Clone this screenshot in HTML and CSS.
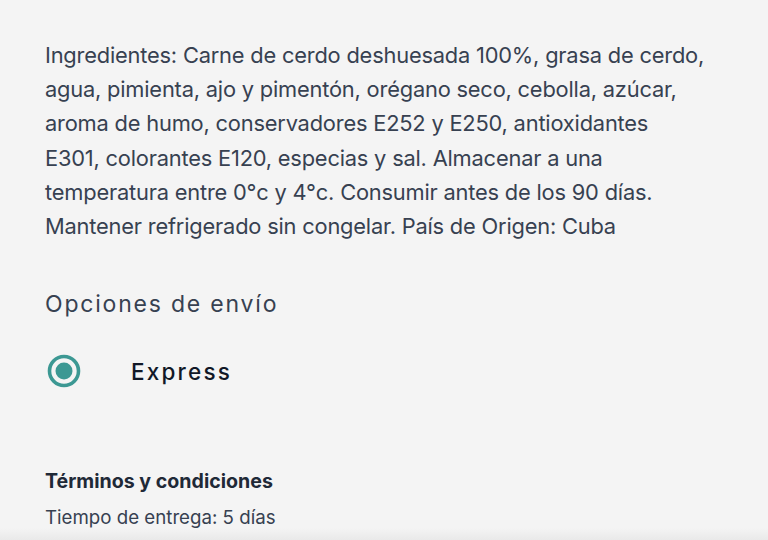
FILE: index.html
```html
<!DOCTYPE html>
<html lang="es">
<head>
<meta charset="utf-8">
<link rel="stylesheet" href="styles.css">
</head>
<body>
<main class="page">
  <p class="desc">Ingredientes: Carne de cerdo deshuesada 100%, grasa de cerdo,<br>agua, pimienta, ajo y pimentón, orégano seco, cebolla, azúcar,<br>aroma de humo, conservadores E252 y E250, antioxidantes<br>E301, colorantes E120, especias y sal. Almacenar a una<br>temperatura entre 0°c y 4°c. Consumir antes de los 90 días.<br>Mantener refrigerado sin congelar. País de Origen: Cuba</p>
  <h2 class="section-title">Opciones de envío</h2>
  <div class="option">
    <svg class="radio" width="34" height="34" viewBox="0 0 34 34"><circle cx="17" cy="17" r="14.5" fill="none" stroke="#3c9893" stroke-width="3.6"/><circle cx="17" cy="17" r="8.5" fill="#3c9893"/></svg>
    <span class="option-label">Express</span>
  </div>
  <h3 class="terms-title">Términos y condiciones</h3>
  <p class="terms-text">Tiempo de entrega: 5 días</p>
</main>
<div class="bottom-shade"></div>
</body>
</html>
```
FILE: styles.css
```css
html, body {
  margin: 0;
  padding: 0;
  background: #f4f4f4;
  height: 540px;
  overflow: hidden;
}
body {
  font-family: Inter, "Noto Sans", sans-serif;
  color: #374151;
  position: relative;
}
.page {
  padding: 38px 45px 0 45px;
}
.desc {
  margin: 0;
  font-size: 21.85px;
  line-height: 34.2px;
  letter-spacing: -0.2px;
  color: #374151;
  white-space: nowrap;
}
.section-title {
  margin: 46px 0 0 0;
  font-weight: 400;
  font-size: 23px;
  line-height: 30px;
  letter-spacing: 1.8px;
  color: #374151;
}
.option {
  display: flex;
  align-items: center;
  margin-top: 35px;
  padding-left: 2px;
}
.radio {
  display: block;
}
.option-label {
  margin-left: 50px;
  font-size: 22.5px;
  font-weight: 500;
  letter-spacing: 2.2px;
  color: #111827;
}
.terms-title {
  margin: 80px 0 0 0;
  font-size: 19.6px;
  font-weight: 700;
  line-height: 26px;
  color: #1f2937;
}
.terms-text {
  margin: 11px 0 0 0;
  font-size: 18.7px;
  line-height: 26px;
  color: #374151;
}
.bottom-shade {
  position: absolute;
  left: 0;
  right: 0;
  bottom: 0;
  height: 12px;
  background: linear-gradient(#f4f4f4, #e9e9e9);
}
```
